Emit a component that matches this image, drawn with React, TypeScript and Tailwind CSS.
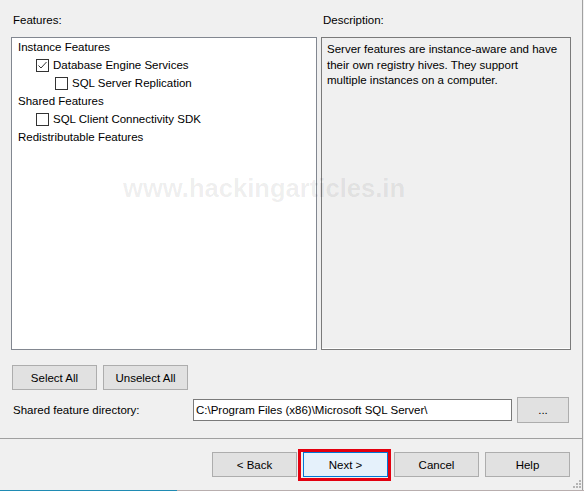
import React from 'react';

const Checkbox: React.FC<{ checked?: boolean }> = ({ checked }) => (
  <span className="w-[13px] h-[13px] border border-[#333333] bg-white flex items-center justify-center shrink-0">
    {checked && (
      <svg width="11" height="11" viewBox="0 0 11 11">
        <polyline points="1.5,5.5 4,8 9.5,2" fill="none" stroke="#333333" strokeWidth="1" />
      </svg>
    )}
  </span>
);

const Button: React.FC<{ label: string; primary?: boolean; className?: string }> = ({ label, primary, className }) => (
  <div
    className={
      'h-[25px] w-[85px] flex items-center justify-center border ' +
      (primary ? 'border-[#0078d7] bg-[#e5f1fb] ' : 'border-[#adadad] bg-[#e1e1e1] ') +
      (className ?? '')
    }
  >
    {label}
  </div>
);

const App: React.FC = () => {
  return (
    <div className="relative w-[584px] h-[491px] bg-[#f0f0f0] overflow-hidden flex flex-col text-[11.5px] text-black font-['Segoe_UI','Liberation_Sans',sans-serif] leading-[16px]">
      <div className="flex flex-1">
        <div className="w-[582px] flex flex-col">
          <div className="pl-[11px] flex flex-col">
            {/* labels */}
            <div className="flex h-[37px] pt-[12px]">
              <div className="w-[310px] pl-[2px]">Features:</div>
              <div className="pl-[2px]">Description:</div>
            </div>

            {/* list + description */}
            <div className="flex gap-[4px] h-[313px]">
              <div className="w-[306px] border border-[#828790] bg-white">
                <div className="h-[18px] flex items-center pl-[6px]">Instance Features</div>
                <div className="h-[18px] flex items-center pl-[24px] gap-[4px]">
                  <Checkbox checked />
                  <span>Database Engine Services</span>
                </div>
                <div className="h-[18px] flex items-center pl-[43px] gap-[4px]">
                  <Checkbox />
                  <span>SQL Server Replication</span>
                </div>
                <div className="h-[18px] flex items-center pl-[6px]">Shared Features</div>
                <div className="h-[18px] flex items-center pl-[24px] gap-[4px]">
                  <Checkbox />
                  <span>SQL Client Connectivity SDK</span>
                </div>
                <div className="h-[18px] flex items-center pl-[6px]">Redistributable Features</div>
              </div>
              <div className="w-[250px] border border-[#7a7a7a] shadow-[inset_0_-1px_0_#ffffff] bg-[#f0f0f0] pt-[4px] pl-[5px] pr-[4px] leading-[15.5px]">
                Server features are instance-aware and have
                <br />
                their own registry hives. They support
                <br />
                multiple instances on a computer.
              </div>
            </div>

            {/* select buttons */}
            <div className="flex gap-[6px] mt-[15px] pl-[1px]">
              <Button label="Select All" />
              <Button label="Unselect All" />
            </div>

            {/* directory row */}
            <div className="flex items-center mt-[7px] h-[26px]">
              <div className="w-[182px] pl-[2px]">Shared feature directory:</div>
              <div className="w-[319px] h-[22px] border border-[#7a7a7a] bg-white flex items-center pl-[2px]">
                C:\Program Files (x86)\Microsoft SQL Server\
              </div>
              <div className="ml-[5px] w-[52px] h-[26px] border border-[#adadad] bg-[#e1e1e1] flex items-center justify-center">
                ...
              </div>
            </div>
          </div>

          {/* separator */}
          <div className="mt-[15px] h-px bg-[#a0a0a0]" />

          {/* navigation buttons */}
          <div className="flex gap-[6px] mt-[13px] pl-[212px]">
            <Button label="< Back" />
            <Button label="Next >" primary />
            <Button label="Cancel" />
            <Button label="Help" />
          </div>
        </div>
        <div className="w-px bg-[#a0a0a0]" />
      </div>

      {/* bottom edge strip */}
      <div className="h-px flex">
        <div className="w-[177px] bg-[#1f8bb3]" />
        <div className="flex-1 bg-[#b8aeae]" />
      </div>

      {/* red highlight around Next */}
      <div className="absolute left-[298px] top-[449px] w-[93px] h-[32px] border-[3px] border-[#e3000f] pointer-events-none" />

      {/* size grip */}
      <svg className="absolute left-[572px] top-[479px]" width="10" height="10" viewBox="0 0 10 10">
        <g fill="#b4b4b4">
          <rect x="7" y="1" width="2" height="2" />
          <rect x="4" y="4" width="2" height="2" />
          <rect x="7" y="4" width="2" height="2" />
          <rect x="1" y="7" width="2" height="2" />
          <rect x="4" y="7" width="2" height="2" />
          <rect x="7" y="7" width="2" height="2" />
        </g>
      </svg>

      {/* watermark */}
      <div className="absolute left-[123px] top-[172px] text-[25.6px] font-bold leading-[32px] text-black/[0.07] font-['Liberation_Sans',Arial,sans-serif] pointer-events-none">
        www.hackingarticles.in
      </div>
    </div>
  );
};

export default App;
